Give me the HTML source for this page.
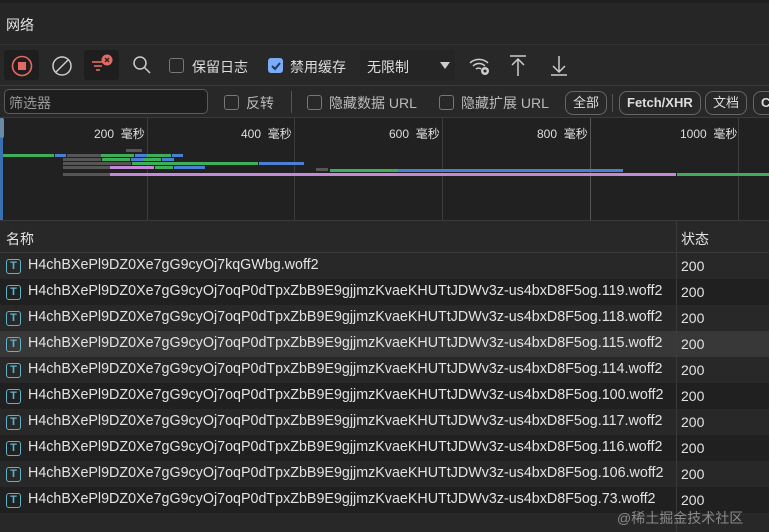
<!DOCTYPE html>
<html><head><meta charset="utf-8"><style>
*{box-sizing:border-box;margin:0;padding:0}
body{width:769px;height:532px;overflow:hidden;background:#282828;color:#e3e3e3;font-family:"Liberation Sans","Noto Sans CJK SC",sans-serif;font-size:14px;position:relative}
.abs{position:absolute}
.title{left:0;top:0;width:769px;height:44px;background:#262626;border-top:3px solid #1e1e1e}
.title span{position:absolute;left:6px;top:12px;font-size:14px}
.tb{left:0;top:44px;width:769px;height:42px;background:#282828;border-top:1px solid #333;border-bottom:1px solid #3a3a3a}
.fb{left:0;top:86px;width:769px;height:32px;border-bottom:1px solid #3a3a3a}
.cb{position:absolute;width:15px;height:15px;border:1.5px solid #777;border-radius:3px}
.lbl{position:absolute;font-size:14px;color:#ddd}
.btn{position:absolute;top:91px;height:24px;border:1px solid #666;border-radius:8px;font-size:13px;padding:0 7px;line-height:22px;color:#ddd}
.tl{left:0;top:118px;width:769px;height:102px;background:#212121}
.vl{position:absolute;top:0;width:1px;height:102px;background:#3c3c3c}
.tk{position:absolute;top:7px;font-size:12px;color:#ddd}
.bar{position:absolute;height:3px}
.hdr{left:0;top:220px;width:769px;height:33px;background:#282828;border-top:1px solid #3a3a3a;border-bottom:1px solid #3a3a3a}
.row{position:absolute;left:0;width:769px;height:26px}
.row .n{position:absolute;left:28px;top:4px;font-size:14.3px;white-space:nowrap}
.row .s{position:absolute;left:681px;top:5px}
.ic{position:absolute;left:6px;top:6px;width:15px;height:15px;border:1.5px solid #5fb3c9;border-radius:3px;color:#5fb3c9;font-size:11px;line-height:12px;text-align:center;font-weight:bold}
.col{left:676px;top:220px;width:1px;height:312px;background:#3a3a3a}
</style></head><body>
<div class="abs title"><span>网络</span></div>
<div class="abs tb">
 <div class="abs" style="left:4px;top:5px;width:35px;height:30px;background:#1e1e1e;border-radius:3px"></div>
 <svg class="abs" style="left:10px;top:9px" width="24" height="24"><circle cx="12" cy="12" r="9.5" fill="none" stroke="#e46962" stroke-width="1.6"/><rect x="8" y="8" width="8" height="8" fill="#e46962"/></svg>
 <svg class="abs" style="left:50px;top:9px" width="24" height="24"><circle cx="12" cy="12" r="9" fill="none" stroke="#ccc" stroke-width="1.5"/><line x1="6" y1="18" x2="18" y2="6" stroke="#ccc" stroke-width="1.5"/></svg>
 <div class="abs" style="left:84px;top:5px;width:35px;height:30px;background:#1e1e1e;border-radius:3px"></div>
 <svg class="abs" style="left:88px;top:8px" width="28" height="24"><g stroke="#e46962" stroke-width="1.6"><line x1="4" y1="9" x2="16" y2="9"/><line x1="6" y1="13" x2="14" y2="13"/><line x1="8" y1="17" x2="12" y2="17"/></g><circle cx="19" cy="7" r="5.5" fill="#e46962"/><path d="M17 5l4 4M21 5l-4 4" stroke="#222" stroke-width="1.3"/></svg>
 <svg class="abs" style="left:131px;top:9px" width="22" height="22"><circle cx="9" cy="9" r="6" fill="none" stroke="#ccc" stroke-width="1.5"/><line x1="13.5" y1="13.5" x2="19" y2="19" stroke="#ccc" stroke-width="1.5"/></svg>
 <div class="cb" style="left:169px;top:13px"></div><span class="lbl" style="left:192px;top:12px">保留日志</span>
 <div class="cb" style="left:268px;top:13px;background:#7cacf8;border-color:#7cacf8"></div>
 <svg class="abs" style="left:269px;top:14px" width="14" height="14"><path d="M3 7l3 3 5-6" stroke="#1e3a5f" stroke-width="2" fill="none"/></svg>
 <span class="lbl" style="left:290px;top:12px">禁用缓存</span>
 <div class="abs" style="left:360px;top:5px;width:95px;height:31px;background:#252525;border-radius:3px"></div>
 <span class="lbl" style="left:367px;top:12px">无限制</span>
 <svg class="abs" style="left:440px;top:17px" width="10" height="8"><path d="M0 0h10L5 7z" fill="#ccc"/></svg>
 <svg class="abs" style="left:467px;top:8px" width="26" height="26"><g fill="none" stroke="#ccc" stroke-width="1.5"><path d="M3 10a13 13 0 0 1 18 0"/><path d="M6 13a8.5 8.5 0 0 1 12 0"/><path d="M9 16a4 4 0 0 1 5 0"/></g><circle cx="18" cy="18" r="4" fill="#ccc"/><circle cx="18" cy="18" r="1.5" fill="#282828"/></svg>
 <svg class="abs" style="left:508px;top:9px" width="20" height="24"><g stroke="#ccc" stroke-width="1.5" fill="none"><line x1="2" y1="2" x2="18" y2="2"/><line x1="10" y1="5" x2="10" y2="22"/><path d="M4 11l6-6 6 6"/></g></svg>
 <svg class="abs" style="left:549px;top:9px" width="20" height="24"><g stroke="#ccc" stroke-width="1.5" fill="none"><line x1="2" y1="21" x2="18" y2="21"/><line x1="10" y1="2" x2="10" y2="18"/><path d="M4 12l6 6 6-6"/></g></svg>
</div>
<div class="abs fb">
 <div class="abs" style="left:4px;top:3px;width:204px;height:25px;border:1px solid #5a5a5a;border-radius:5px;background:#1e1e1e"></div>
 <span class="lbl" style="left:9px;top:7px;color:#999">筛选器</span>
 <div class="cb" style="left:224px;top:9px"></div><span class="lbl" style="left:246px;top:7px;color:#bbb">反转</span>
 <div class="abs" style="left:291px;top:5px;width:1px;height:22px;background:#555"></div>
 <div class="cb" style="left:307px;top:9px"></div><span class="lbl" style="left:329px;top:7px;color:#bbb">隐藏数据 URL</span>
 <div class="cb" style="left:439px;top:9px"></div><span class="lbl" style="left:461px;top:7px;color:#bbb">隐藏扩展 URL</span>
</div>
<div class="btn" style="left:565px">全部</div>
<div class="abs" style="left:612px;top:94px;width:1px;height:18px;background:#555"></div>
<div class="btn" style="left:619px;font-weight:bold">Fetch/XHR</div>
<div class="btn" style="left:705px">文档</div>
<div class="btn" style="left:753px;font-weight:bold;width:30px">C</div>
<div class="abs tl">
 <div class="vl" style="left:147px"></div><div class="vl" style="left:294px"></div><div class="vl" style="left:442px"></div><div class="vl" style="left:590px;background:#555"></div><div class="vl" style="left:738px"></div>
 <div class="abs" style="left:0;top:0;width:3px;height:102px;background:#3a6fb0"></div>
 <div class="abs" style="left:0;top:0;width:4px;height:20px;background:#6a8aa6;border-radius:2px"></div>
 <span class="tk" style="left:94px">200&nbsp; 毫秒</span><span class="tk" style="left:241px">400&nbsp; 毫秒</span><span class="tk" style="left:389px">600&nbsp; 毫秒</span><span class="tk" style="left:537px">800&nbsp; 毫秒</span><span class="tk" style="left:680px">1000&nbsp; 毫秒</span>
 <div class="bar" style="left:3px;top:36px;width:51px;background:#3fae5a"></div>
 <div class="bar" style="left:55px;top:36px;width:11px;background:#4a7fd4"></div>
 <div class="bar" style="left:67px;top:36px;width:34px;background:#555"></div>
 <div class="bar" style="left:101px;top:36px;width:33px;background:#3fae5a"></div>
 <div class="bar" style="left:135px;top:36px;width:12px;background:#4a7fd4"></div>
 <div class="bar" style="left:147px;top:36px;width:24px;background:#3fae5a"></div>
 <div class="bar" style="left:172px;top:36px;width:11px;background:#4a7fd4"></div>
 <div class="bar" style="left:126px;top:31px;width:16px;background:#555"></div>
 <div class="bar" style="left:63px;top:40px;width:38px;background:#555"></div>
 <div class="bar" style="left:102px;top:40px;width:28px;background:#3fae5a"></div>
 <div class="bar" style="left:131px;top:40px;width:12px;background:#4a7fd4"></div>
 <div class="bar" style="left:143px;top:40px;width:18px;background:#3fae5a"></div>
 <div class="bar" style="left:162px;top:40px;width:12px;background:#4a7fd4"></div>
 <div class="bar" style="left:63px;top:44px;width:68px;background:#555"></div>
 <div class="bar" style="left:132px;top:44px;width:126px;background:#3fae5a"></div>
 <div class="bar" style="left:259px;top:44px;width:45px;background:#4a7fd4"></div>
 <div class="bar" style="left:63px;top:48px;width:47px;background:#555"></div>
 <div class="bar" style="left:110px;top:48px;width:44px;background:#c48ad8"></div>
 <div class="bar" style="left:155px;top:48px;width:18px;background:#3fae5a"></div>
 <div class="bar" style="left:174px;top:48px;width:31px;background:#4a7fd4"></div>
 <div class="bar" style="left:316px;top:50px;width:12px;background:#555"></div>
 <div class="bar" style="left:330px;top:51px;width:68px;background:#3fae5a"></div>
 <div class="bar" style="left:398px;top:51px;width:225px;background:#4a7fd4"></div>
 <div class="bar" style="left:63px;top:55px;width:47px;background:#555"></div>
 <div class="bar" style="left:110px;top:55px;width:566px;background:#c48ad8"></div>
 <div class="bar" style="left:677px;top:55px;width:92px;background:#3fae5a"></div>
</div>
<div class="abs hdr"><span class="abs" style="left:6px;top:8px">名称</span><span class="abs" style="left:681px;top:8px">状态</span></div>
<div class="row" style="top:253px;background:#282828"><div class="ic">T</div><span class="n">H4chBXePl9DZ0Xe7gG9cyOj7kqGWbg.woff2</span><span class="s">200</span></div>
<div class="row" style="top:279px;background:#202020"><div class="ic">T</div><span class="n">H4chBXePl9DZ0Xe7gG9cyOj7oqP0dTpxZbB9E9gjjmzKvaeKHUTtJDWv3z-us4bxD8F5og.119.woff2</span><span class="s">200</span></div>
<div class="row" style="top:305px;background:#282828"><div class="ic">T</div><span class="n">H4chBXePl9DZ0Xe7gG9cyOj7oqP0dTpxZbB9E9gjjmzKvaeKHUTtJDWv3z-us4bxD8F5og.118.woff2</span><span class="s">200</span></div>
<div class="row" style="top:331px;background:#383838"><div class="ic">T</div><span class="n">H4chBXePl9DZ0Xe7gG9cyOj7oqP0dTpxZbB9E9gjjmzKvaeKHUTtJDWv3z-us4bxD8F5og.115.woff2</span><span class="s">200</span></div>
<div class="row" style="top:357px;background:#282828"><div class="ic">T</div><span class="n">H4chBXePl9DZ0Xe7gG9cyOj7oqP0dTpxZbB9E9gjjmzKvaeKHUTtJDWv3z-us4bxD8F5og.114.woff2</span><span class="s">200</span></div>
<div class="row" style="top:383px;background:#202020"><div class="ic">T</div><span class="n">H4chBXePl9DZ0Xe7gG9cyOj7oqP0dTpxZbB9E9gjjmzKvaeKHUTtJDWv3z-us4bxD8F5og.100.woff2</span><span class="s">200</span></div>
<div class="row" style="top:409px;background:#282828"><div class="ic">T</div><span class="n">H4chBXePl9DZ0Xe7gG9cyOj7oqP0dTpxZbB9E9gjjmzKvaeKHUTtJDWv3z-us4bxD8F5og.117.woff2</span><span class="s">200</span></div>
<div class="row" style="top:435px;background:#202020"><div class="ic">T</div><span class="n">H4chBXePl9DZ0Xe7gG9cyOj7oqP0dTpxZbB9E9gjjmzKvaeKHUTtJDWv3z-us4bxD8F5og.116.woff2</span><span class="s">200</span></div>
<div class="row" style="top:461px;background:#282828"><div class="ic">T</div><span class="n">H4chBXePl9DZ0Xe7gG9cyOj7oqP0dTpxZbB9E9gjjmzKvaeKHUTtJDWv3z-us4bxD8F5og.106.woff2</span><span class="s">200</span></div>
<div class="row" style="top:487px;background:#202020"><div class="ic">T</div><span class="n">H4chBXePl9DZ0Xe7gG9cyOj7oqP0dTpxZbB9E9gjjmzKvaeKHUTtJDWv3z-us4bxD8F5og.73.woff2</span><span class="s">200</span></div>
<div class="abs col"></div>
<span class="abs" style="left:617px;top:508px;font-size:14px;color:#8a8a8a">@稀土掘金技术社区</span>
</body></html>
